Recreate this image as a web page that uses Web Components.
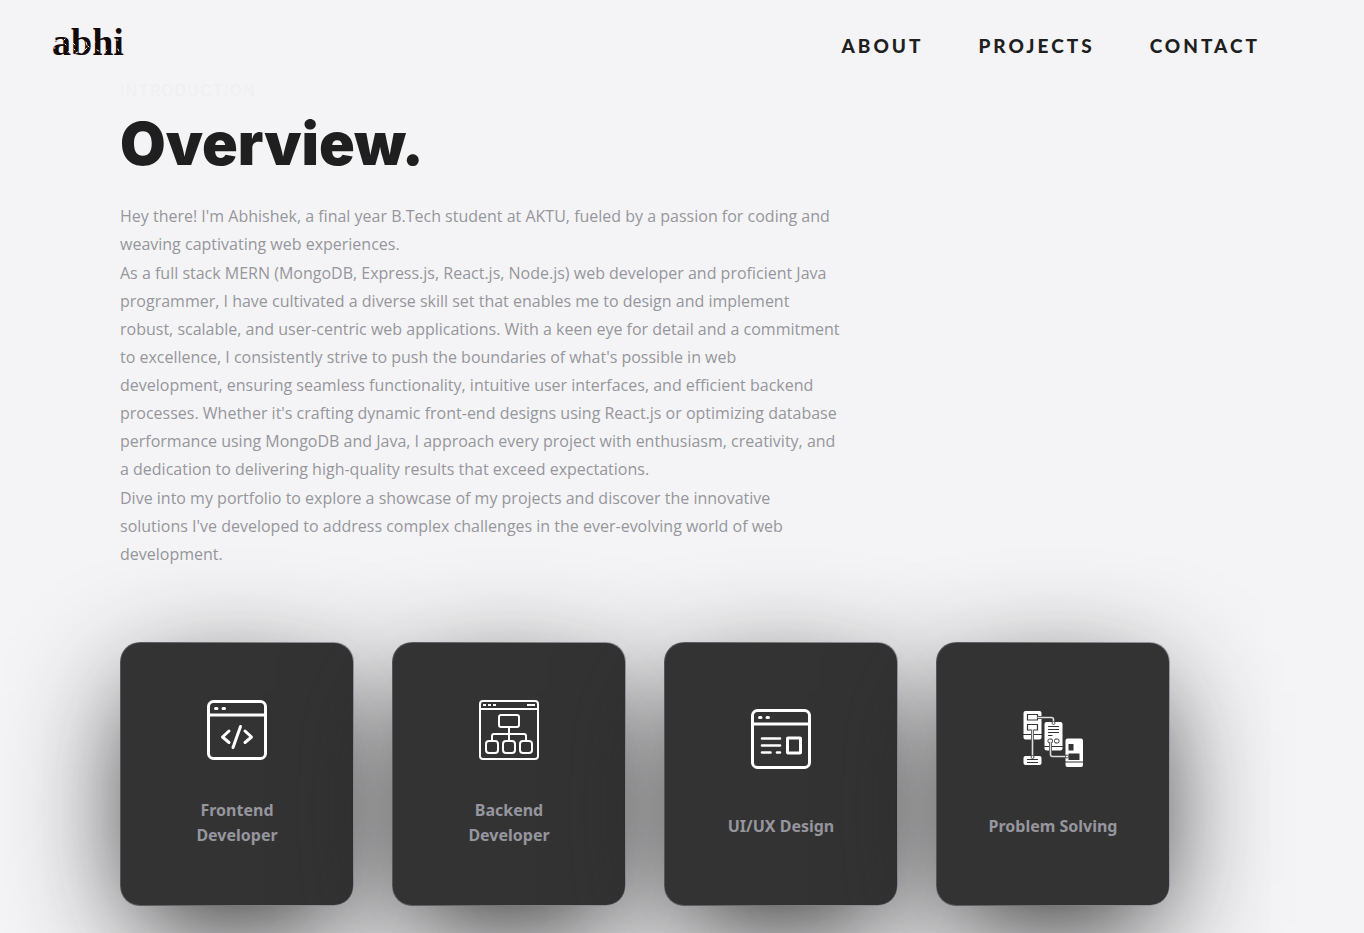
<!DOCTYPE html>
<html lang="en">
<head>
<meta charset="utf-8">
<meta name="viewport" content="width=device-width, initial-scale=1">
<title>abhi</title>
<style>
  html, body { margin: 0; }
  body { background: #f4f4f6; color: #1f1f1f; font-family: "Open Sans", sans-serif; }
</style>
</head>
<body>
<portfolio-page></portfolio-page>
<script>
const define = (name, html) => {
  const template = document.createElement('template');
  template.innerHTML = html;
  customElements.define(name, class extends HTMLElement {
    constructor() {
      super();
      this.attachShadow({ mode: 'open' }).append(template.content.cloneNode(true));
    }
  });
};

define('site-logo', `
<style>
  :host { display: block; position: relative; }
  a { display: block; color: #140a0a; text-decoration: none; font: bold 38px/44px "Liberation Serif", serif; }
  svg { position: absolute; left: 0; top: 0; width: 100%; height: 100%; pointer-events: none; }
</style>
<a href="#home">abhi</a>
<svg viewBox="0 0 72 44" fill="none" stroke="#f4f4f6" stroke-width="1" stroke-linecap="round" aria-hidden="true">
  <path d="M3 20l2 1M8 29l1 2M13 24l1 1M2 28h1M12 20l1-1M16 32l1-1M21 23l2 2M22 29l1 1M24 33l2-1M28 21l2 2M30 27l2 1M34 22l1 3M33 30l2-2M36 26l1 1M29 33l1 0M42 20l1 2M45 30l2 1M41 14l1 0M51 24l1 2M54 31l1-1M62 25l1 1M66 29l1 2M65 20l1 0"/>
</svg>`);

define('nav-link', `
<style>
  :host { display: block; }
  a { color: #1f1f1f; text-decoration: none; font: 900 19px/24px Lato, sans-serif; letter-spacing: 3px; }
</style>
<a href="#"><slot></slot></a>`);

define('site-header', `
<style>
  :host { display: block; }
  header { display: flex; justify-content: space-between; align-items: flex-start; padding: 20px 104px 0 52px; height: 52px; }
  nav { display: flex; gap: 55px; padding-top: 14px; }
</style>
<header>
  <site-logo></site-logo>
  <nav aria-label="Main">
    <nav-link>ABOUT</nav-link><nav-link>PROJECTS</nav-link><nav-link>CONTACT</nav-link>
  </nav>
</header>`);

define('section-heading', `
<style>
  :host { display: block; }
  p { margin: 0; color: #f0f0f2; font: 500 16px/28px Inter, sans-serif; letter-spacing: 1px; }
  h2 { margin: 0; color: #1f1f1f; font: 900 59px/80px Inter, sans-serif; }
</style>
<p><slot name="kicker"></slot></p>
<h2><slot></slot></h2>`);

define('intro-text', `
<style>
  :host { display: flex; flex-direction: column; gap: 1px; color: #96969c; font: 16px/28px "Open Sans", sans-serif; }
  p { margin: 0; white-space: nowrap; }
</style>
<p>Hey there! I'm Abhishek, a final year B.Tech student at AKTU, fueled by a passion for coding and<br>weaving captivating web experiences.</p>
<p>As a full stack MERN (MongoDB, Express.js, React.js, Node.js) web developer and proficient Java<br>programmer, I have cultivated a diverse skill set that enables me to design and implement<br>robust, scalable, and user-centric web applications. With a keen eye for detail and a commitment<br>to excellence, I consistently strive to push the boundaries of what's possible in web<br>development, ensuring seamless functionality, intuitive user interfaces, and efficient backend<br>processes. Whether it's crafting dynamic front-end designs using React.js or optimizing database<br>performance using MongoDB and Java, I approach every project with enthusiasm, creativity, and<br>a dedication to delivering high-quality results that exceed expectations.</p>
<p>Dive into my portfolio to explore a showcase of my projects and discover the innovative<br>solutions I've developed to address complex challenges in the ever-evolving world of web<br>development.</p>`);

define('service-card', `
<style>
  :host { display: flex; box-sizing: border-box; width: 234px; min-height: 264px; padding: 1px;
          border-radius: 20px; background: linear-gradient(90deg, #55555a, #9a9aa2);
          box-shadow: 0 35px 120px -15px #222; }
  article { flex: 1; display: flex; flex-direction: column; align-items: center; justify-content: space-evenly;
            padding: 20px 48px; border-radius: 19px; background: #333; }
  h3 { margin: 0; color: #96969e; text-align: center; font: bold 16px/25px "Noto Sans", sans-serif; white-space: nowrap; }
  ::slotted(svg) { display: block; width: 60px; height: 60px; }
</style>
<article><slot name="icon"></slot><h3><slot></slot></h3></article>`);

define('portfolio-page', `
<style>
  :host { display: block; }
  main { padding: 4px 120px 27px; }
  intro-text { margin: 18px 0 74px; }
  .cards { display: flex; flex-wrap: wrap; gap: 38px; }
</style>
<site-header></site-header>
<main>
  <section-heading><span slot="kicker">INTRODUCTION</span>Overview.</section-heading>
  <intro-text></intro-text>
  <div class="cards">
    <service-card>
      <svg slot="icon" viewBox="0 0 60 60" fill="none" stroke="#fff" stroke-width="3" stroke-linecap="round" stroke-linejoin="round" aria-hidden="true">
        <rect x="1.5" y="1.5" width="57" height="57" rx="5"/><path d="M2 15h56"/><path d="M8.5 8.5h1.5M16 8.5h1.5"/>
        <path d="M22 31l-6.5 6 6.5 5.500M38 31l6.500 6-6.500 5.500M33.500 26.500l-7.500 21"/>
      </svg>Frontend<br>Developer</service-card>
    <service-card>
      <svg slot="icon" viewBox="0 0 60 60" fill="none" stroke="#fff" stroke-width="2" stroke-linejoin="round" aria-hidden="true">
        <rect x="1" y="1" width="58" height="58" rx="3"/><path d="M1 9h58"/><path d="M4 5h3M9 5h3M14 5h3M48 5h8"/>
        <rect x="20" y="15" width="20" height="12" rx="2"/><path d="M30 27v14M13 41v-5q0-2 2-2h30q2 0 2 2v5"/>
        <rect x="7" y="41" width="12" height="12" rx="3"/><rect x="24" y="41" width="12" height="12" rx="3"/><rect x="41" y="41" width="12" height="12" rx="3"/>
      </svg>Backend<br>Developer</service-card>
    <service-card>
      <svg slot="icon" viewBox="0 0 60 60" fill="none" stroke="#fff" stroke-width="3" stroke-linecap="round" stroke-linejoin="round" aria-hidden="true">
        <rect x="1.5" y="1.5" width="57" height="57" rx="5"/><path d="M2 15h56"/><path d="M8.500 8.500h1.500M16 8.500h1.500"/>
        <path stroke-width="2.600" d="M11 29.500h18M11 36.500h18M11 43.500h8.500M26 43.500h3"/><rect x="36.500" y="29" width="13" height="15" rx=".5"/>
      </svg>UI/UX Design</service-card>
    <service-card>
      <svg slot="icon" viewBox="0 0 60 60" fill="none" aria-hidden="true">
        <g fill="#fff">
          <rect x=".5" y="2" width="18" height="28.500" rx="2"/><rect x="21.500" y="13" width="18" height="28.500" rx="2"/>
          <rect x="42.500" y="29.500" width="17.500" height="28.500" rx="2"/><rect x=".5" y="47" width="18" height="9" rx="2"/>
        </g>
        <g stroke="#333">
          <path d="M0 25.500h19M21 37.500h19M42 53h18" stroke-width="1.200"/>
          <path d="M4.500 5.500h10v5.500h-10zM4.500 15.500h10v5.500h-10z" stroke-width="1.200"/>
          <path d="M25 17.500h11M25 20.500h11M25 23.500h11M25 26.500h4.500M4 50.500h11M4 53.500h11" stroke-width="1"/>
          <rect x="25" y="30" width="4.500" height="4" rx="1.500"/><rect x="31.500" y="30" width="4.500" height="4" rx="1.500"/>
        </g>
        <path d="M45.500 35h5v6.500h-5zM45.500 44.500h11v6.500h-11z" fill="#333"/>
        <path d="M9.500 21v27M15 8.500h13.500q2 0 2 2v3M27.500 33v12.500q0 2 2 2h14" stroke="#333" stroke-width="3"/>
        <path d="M9.500 20v27M14.500 8.500h14q2 0 2 2v3M27.500 32v13.500q0 2 2 2h14" stroke="#ddd" stroke-width="1.600"/>
        <g fill="#fff" stroke="#333" stroke-width=".8"><circle cx="9.500" cy="48" r="1.500"/><circle cx="30.500" cy="14" r="1.500"/><circle cx="44" cy="47.500" r="1.500"/></g>
      </svg>Problem Solving</service-card>
  </div>
</main>`);
</script>
</body>
</html>
